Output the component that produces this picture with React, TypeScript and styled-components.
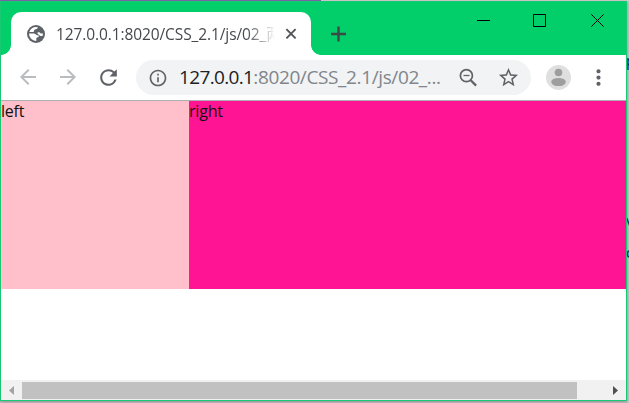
import React from 'react';
import styled, { createGlobalStyle } from 'styled-components';
import { MdArrowBack, MdArrowForward, MdRefresh, MdInfoOutline, MdStarBorder, MdMoreVert } from 'react-icons/md';

const GlobalStyle = createGlobalStyle`
  html, body { margin: 0; padding: 0; overflow: hidden; }
  body { font-family: "Open Sans", "Noto Sans CJK SC", sans-serif; }
  svg { display: block; flex: none; }
`;

const Desktop = styled.div`
  position: relative;
  box-sizing: border-box;
  width: 629px;
  height: 403px;
  padding-top: 1px;
  overflow: hidden;
  background: linear-gradient(90deg, #8067ac 321px, #d0d0d0 321px) 0 0 / 100% 1px no-repeat, #c6c6c9;
`;

const BackgroundLetter = styled.span<{ $top: number }>`
  position: absolute;
  left: 626px;
  top: ${(p) => p.$top}px;
  font-size: 15px;
  line-height: 20px;
  color: #10204a;
`;

const Window = styled.div`
  position: relative;
  z-index: 1;
  box-sizing: border-box;
  display: flex;
  flex-direction: column;
  width: 627px;
  height: 400px;
  border: 1px solid #18c873;
  background: #fff;
  box-shadow: 0 1px 3px rgba(0, 0, 0, 0.3);
`;

const TabStrip = styled.div`
  display: flex;
  flex: none;
  height: 53px;
  background: #02ce6a;
`;

const Foot = styled.div<{ $side: 'left' | 'right' }>`
  align-self: flex-end;
  width: 10px;
  height: 10px;
  background: radial-gradient(circle at ${(p) => (p.$side === 'left' ? '0 0' : '100% 0')}, transparent 9.5px, #fff 10.2px);
`;

const Tab = styled.div`
  box-sizing: border-box;
  display: flex;
  align-items: center;
  width: 300px;
  height: 43px;
  margin-top: 10px;
  padding-left: 14px;
  border-radius: 10px 10px 0 0;
  background: #fff;
  color: #5f6368;
`;

const TabTitle = styled.div`
  width: 219px;
  margin-left: 9px;
  overflow: hidden;
  white-space: nowrap;
  font-size: 15.5px;
  line-height: 24px;
  letter-spacing: -0.1px;
  color: #45484c;
  mask-image: linear-gradient(90deg, #000 190px, rgba(0, 0, 0, 0.35) 210px, transparent 219px);
`;

const TabClose = styled.svg`
  margin-left: 10px;
`;

const NewTab = styled.svg`
  margin: 24px 0 0 9px;
`;

const Controls = styled.div`
  display: flex;
  gap: 44px;
  margin: 12px 0 0 auto;
  padding-right: 22px;
`;

const Toolbar = styled.div`
  box-sizing: border-box;
  display: flex;
  flex: none;
  align-items: center;
  height: 46px;
  padding-left: 15px;
  border-bottom: 1px solid #adb0b0;
  color: #5f6368;
`;

const NavButtons = styled.div`
  display: flex;
  gap: 16px;
  width: 120px;
`;

const NavButton = styled.div<{ $disabled?: boolean }>`
  display: flex;
  color: ${(p) => (p.$disabled ? '#babcbe' : '#5f6368')};
`;

const Omnibox = styled.div`
  box-sizing: border-box;
  display: flex;
  align-items: center;
  width: 395px;
  height: 35px;
  padding: 0 11px 0 12px;
  border-radius: 18px;
  background: #f1f3f4;
`;

const Url = styled.div`
  width: 268px;
  margin-left: 11px;
  margin-top: -2px;
  white-space: nowrap;
  font-size: 19px;
  line-height: 30px;
  letter-spacing: -0.38px;
  color: #80868b;
`;

const Host = styled.span`
  color: #202124;
  letter-spacing: -0.65px;
`;

const OmniIcons = styled.div`
  display: flex;
  gap: 17px;
  margin-left: auto;
`;

const Avatar = styled.svg`
  margin: 0 15px 0 15px;
`;

const Page = styled.div`
  display: flex;
  flex: 1;
  align-items: flex-start;
`;

const Column = styled.div<{ $color: string; $width?: number }>`
  flex: ${(p) => (p.$width ? `0 0 ${p.$width}px` : '1')};
  height: 188px;
  background: ${(p) => p.$color};
  color: #111;
  font-size: 16px;
  line-height: 21px;
  letter-spacing: -0.2px;
`;

const ScrollBar = styled.div`
  display: flex;
  flex: none;
  align-items: center;
  justify-content: space-between;
  height: 20px;
  background: #f1f1f1;
`;

const ScrollArrow = styled.svg`
  width: 21px;
  height: 20px;
`;

const Track = styled.div`
  width: 583px;
  height: 17px;
  margin-top: 1px;
`;

const Thumb = styled.div`
  width: 555px;
  height: 17px;
  background: #c1c1c1;
`;

export default function App() {
  return (
    <Desktop>
      <GlobalStyle />
      <BackgroundLetter $top={50}>p</BackgroundLetter>
      <BackgroundLetter $top={210}>v</BackgroundLetter>
      <BackgroundLetter $top={242}>d</BackgroundLetter>
      <Window>
        <TabStrip>
          <Foot $side="left" />
          <Tab>
            <svg width="22" height="22" viewBox="0 0 22 22">
              <circle cx="11" cy="11" r="9" fill="#5f6368" />
              <path d="M4 10.6h4.6c2.1 0 2.5 1.9 4.2 1.9h1.3c0 2-2.8 1.3-2.8 3.2v2.2A7 7 0 0 1 4 10.6zM5 7.5A7 7 0 0 1 12.8 4.3c0 1.3-1 1.7-2 1.9-1.5.3-1.8 1-1.8 1.7 0 .9-.8 1.2-1.9 1.2H4.3zM12.6 9.3h1.7c.8 0 .8 1.2 1.7 1.2h2c0 1-.2 1.8-.5 2.5h-1.7c-1.6 0-1.4-1.7-3.2-1.7z" fill="#fff" />
            </svg>
            <TabTitle>127.0.0.1:8020/CSS_2.1/js/02_两</TabTitle>
            <TabClose width="12" height="12" viewBox="0 0 12 12">
              <path d="M1.4 1.2l9.2 9.2m0-9.2l-9.2 9.2" stroke="#505357" strokeWidth="1.9" />
            </TabClose>
          </Tab>
          <Foot $side="right" />
          <NewTab width="16" height="16" viewBox="0 0 16 16">
            <path d="M8.5 .5v15M1 8h15" stroke="#3c4a45" strokeWidth="2.4" />
          </NewTab>
          <Controls>
            <svg width="13" height="13" viewBox="0 0 13 13"><path d="M0 6.5h13" stroke="#000" /></svg>
            <svg width="13" height="13" viewBox="0 0 13 13" overflow="visible"><path d="M-.5.5h12v12h-12z" fill="none" stroke="#000" /></svg>
            <svg width="13" height="13" viewBox="0 0 13 13"><path d="M.3.3l12.4 12.4M12.7.3L.3 12.7" stroke="#000" /></svg>
          </Controls>
        </TabStrip>
        <Toolbar>
          <NavButtons>
            <NavButton $disabled><MdArrowBack size={24} /></NavButton>
            <NavButton $disabled><MdArrowForward size={24} /></NavButton>
            <NavButton><MdRefresh size={25} /></NavButton>
          </NavButtons>
          <Omnibox>
            <MdInfoOutline size={20} />
            <Url><Host>127.0.0.1</Host>:8020/CSS_2.1/js/02_...</Url>
            <OmniIcons>
              <svg width="24" height="24" viewBox="0 0 24 24" fill="none" stroke="#5f6368">
                <circle cx="10.4" cy="9.7" r="6" strokeWidth="1.7" />
                <path d="M14.7 14.2l5.4 5.4" strokeWidth="2.3" />
                <path d="M7.5 9.5h6" strokeWidth="1.3" />
              </svg>
              <MdStarBorder size={23} />
            </OmniIcons>
          </Omnibox>
          <Avatar width="25" height="25" viewBox="0 0 25 25">
            <circle cx="12.5" cy="12.5" r="12.5" fill="#dfdfdf" />
            <circle cx="12.5" cy="7.5" r="3.8" fill="#9e9e9e" />
            <ellipse cx="12.5" cy="17" rx="7.3" ry="4.1" fill="#9e9e9e" />
          </Avatar>
          <MdMoreVert size={25} />
        </Toolbar>
        <Page>
          <Column $color="#ffc0cb" $width={188}>left</Column>
          <Column $color="#ff1493">right</Column>
        </Page>
        <ScrollBar>
          <ScrollArrow viewBox="0 0 21 20"><path d="M13 6v9l-5-4.5z" fill="#a3a3a3" /></ScrollArrow>
          <Track><Thumb /></Track>
          <ScrollArrow viewBox="0 0 21 20"><path d="M8 6v9l5-4.5z" fill="#505050" /></ScrollArrow>
        </ScrollBar>
      </Window>
    </Desktop>
  );
}
